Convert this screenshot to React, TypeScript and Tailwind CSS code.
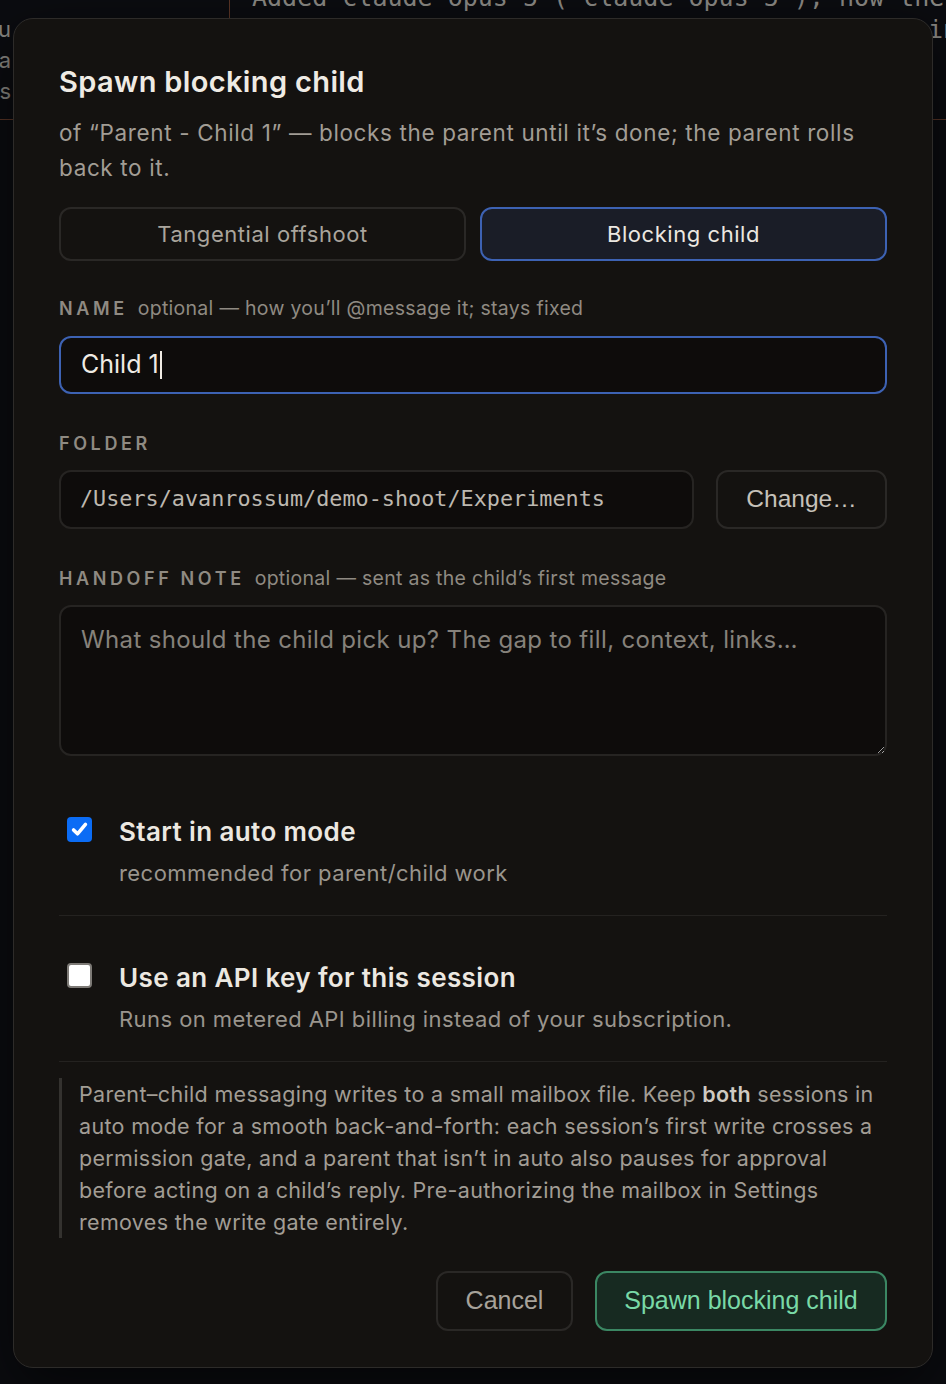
import { useState } from 'react';

type Mode = 'tangent' | 'blocking';

function Label({ title, hint }: { title: string; hint?: string }) {
  return (
    <div className="flex items-baseline gap-[10px] leading-[24px]">
      <span className="text-[18px] font-semibold tracking-[0.2em] uppercase text-[#8f8a82]">{title}</span>
      {hint && <span className="text-[19.5px] tracking-[0.015em] text-[#8f8a82]">{hint}</span>}
    </div>
  );
}

function Check({ checked }: { checked: boolean }) {
  if (checked) {
    return (
      <span className="flex items-center justify-center w-[25px] h-[25px] rounded-[4px] bg-[#0b6cf5] shrink-0">
        <svg width="19" height="19" viewBox="0 0 24 24" fill="none" stroke="#fff" strokeWidth="4.5" strokeLinecap="round" strokeLinejoin="round">
          <path d="M4.5 12.5l5 5L19.5 5.5" />
        </svg>
      </span>
    );
  }
  return <span className="block w-[25px] h-[25px] rounded-[4px] bg-white border-2 border-[#7d7a76] shrink-0" />;
}

function Toggle({ title, desc, checked }: { title: string; desc: string; checked: boolean }) {
  return (
    <div className="flex gap-[27px] pl-2 pt-[46px] pb-[27px] border-b border-[#242220]">
      <div className="pt-[1px]">
        <Check checked={checked} />
      </div>
      <div className="flex flex-col">
        <span className="text-[26px] font-semibold leading-[32px] tracking-[0.015em] text-[#ece8e1]">{title}</span>
        <span className="mt-[10px] text-[22px] leading-[30px] tracking-[0.02em] text-[#9a958d]">{desc}</span>
      </div>
    </div>
  );
}

const modeBtn = (active: boolean) =>
  `h-[54px] rounded-[12px] border-2 text-[22px] tracking-[0.025em] ${
    active ? 'border-[#3d62b3] bg-[#1a1d27] text-[#ece8e1]' : 'border-[#2a2826] text-[#aaa59d]'
  }`;

export default function App() {
  const [mode, setMode] = useState<Mode>('blocking');

  return (
    <div className="relative w-[946px] h-[1384px] overflow-hidden bg-[#0b0c10] font-['Inter','Noto_Sans',sans-serif]">
      {/* editor behind the dialog */}
      <div className="absolute left-[229px] top-0 h-[120px] w-px bg-[#5a3526]" />
      <div className="absolute left-0 top-[119px] w-full h-px bg-[#5a3526]" />
      <div className="absolute left-[252px] top-[-19px] whitespace-nowrap font-['DejaVu_Sans_Mono',monospace] text-[25px] leading-[34px] text-[#8a8883]">
        Added claude-opus-5 (`claude-opus-5`), now the
      </div>
      <div className="absolute left-[928px] top-[13px] whitespace-nowrap font-['DejaVu_Sans_Mono',monospace] text-[25px] leading-[34px] text-[#8a8883]">
        ing
      </div>
      <div className="absolute right-[calc(100%-11px)] top-[14px] text-right text-[22px] leading-[31px] text-[#8a8883] whitespace-nowrap">
        <div>clau</div>
        <div>data</div>
        <div>files</div>
      </div>

      <div className="relative pt-[18px] px-[13px]">
        <div className="rounded-[20px] border border-[#2d2b29] bg-[#141210] px-[45px] pt-[45px] pb-[36px] shadow-[0_20px_60px_rgba(0,0,0,0.6)]">
          <h2 className="text-[29px] font-semibold leading-[36px] tracking-[0.012em] text-[#efebe4]">
            Spawn blocking child
          </h2>
          <p className="mt-[15px] text-[22.5px] leading-[35px] tracking-[0.028em] text-[#a29d95]">
            of “Parent - Child 1” — blocks the parent until it’s done; the parent rolls back to it.
          </p>

          <div className="mt-[22px] grid grid-cols-2 gap-[14px]">
            <button onClick={() => setMode('tangent')} className={modeBtn(mode === 'tangent')}>
              Tangential offshoot
            </button>
            <button onClick={() => setMode('blocking')} className={modeBtn(mode === 'blocking')}>
              Blocking child
            </button>
          </div>

          <div className="mt-[35px]">
            <Label title="Name" hint="optional — how you’ll @message it; stays fixed" />
          </div>
          <div className="mt-[15px] flex items-center h-[58px] rounded-[12px] border-2 border-[#3d62b3] bg-[#0e0c0b] px-[20px]">
            <span className="text-[25px] text-[#efebe4]">Child 1</span>
            <span className="ml-[1px] w-[2px] h-[28px] bg-[#efebe4]" />
          </div>

          <div className="mt-[38px]">
            <Label title="Folder" />
          </div>
          <div className="mt-[14px] flex gap-[22px]">
            <div className="flex-1 flex items-center h-[59px] rounded-[12px] border-2 border-[#262422] bg-[#0e0c0b] px-[19px] font-['DejaVu_Sans_Mono',monospace] text-[21.8px] text-[#bdb8b0]">
              /Users/avanrossum/demo-shoot/Experiments
            </div>
            <button className="w-[171px] h-[59px] rounded-[12px] border-2 border-[#2a2826] font-['Liberation_Sans',Arial,sans-serif] text-[24.5px] text-[#c6c1b9]">
              Change…
            </button>
          </div>

          <div className="mt-[37px]">
            <Label title="Handoff note" hint="optional — sent as the child’s first message" />
          </div>
          <textarea
            placeholder="What should the child pick up? The gap to fill, context, links…"
            className="mt-[14px] block w-full h-[151px] rounded-[12px] border-2 border-[#262422] bg-[#0e0c0b] px-[20px] py-[18px] text-[24px] leading-[30px] tracking-[0.015em] text-[#efebe4] placeholder:text-[#86827b] outline-none scheme-dark"
          />

          <div className="mt-[14px]">
            <Toggle checked title="Start in auto mode" desc="recommended for parent/child work" />
            <Toggle
              checked={false}
              title="Use an API key for this session"
              desc="Runs on metered API billing instead of your subscription."
            />
          </div>

          <div className="mt-[16px] border-l-[3px] border-[#34322f] pl-[17px] text-[21.5px] leading-[32px] tracking-[0.015em] text-[#a29d95]">
            Parent–child messaging writes to a small mailbox file. Keep{' '}
            <b className="font-semibold text-[#cfcac2]">both</b> sessions in auto mode for a smooth back-and-forth: each
            session’s first write crosses a permission gate, and a parent that isn’t in auto also pauses for approval
            before acting on a child’s reply. Pre-authorizing the mailbox in Settings removes the write gate entirely.
          </div>

          <div className="mt-[33px] flex justify-end gap-[22px] font-['Liberation_Sans',Arial,sans-serif] text-[25px]">
            <button className="w-[137px] h-[60px] rounded-[12px] border-2 border-[#2a2826] text-[#a7a29a]">Cancel</button>
            <button className="w-[292px] h-[60px] rounded-[12px] border-2 border-[#3b8763] bg-[#172a21] text-[#79d9a7]">
              Spawn blocking child
            </button>
          </div>
        </div>
      </div>
    </div>
  );
}
